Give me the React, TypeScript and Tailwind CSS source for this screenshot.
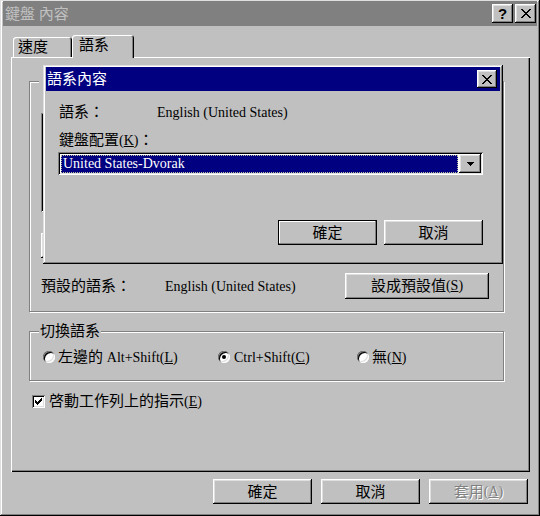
import type { ReactNode } from 'react';
import clsx from 'clsx';

const raised = 'shadow-[inset_-1px_-1px_#000,inset_1px_1px_#fff,inset_-2px_-2px_#808080,inset_2px_2px_#dfdfdf]';
const sunken = 'shadow-[inset_1px_1px_#808080,inset_-1px_-1px_#fff,inset_2px_2px_#000,inset_-2px_-2px_#dfdfdf]';

// latin runs are a bit smaller than the CJK glyphs
function E({ children }: { children: ReactNode }) {
  return <span className="text-[14px]">{children}</span>;
}

function Btn({ children, className, def, disabled }: { children?: ReactNode; className?: string; def?: boolean; disabled?: boolean }) {
  return (
    <div
      className={clsx(
        'flex items-center justify-center bg-[#c0c0c0] leading-[18px]',
        def ? 'border border-black shadow-[inset_-1px_-1px_#808080,inset_1px_1px_#fff]' : raised,
        disabled ? 'text-[#808080] [text-shadow:1px_1px_0_#fff]' : 'text-black',
        className,
      )}
    >
      {children}
    </div>
  );
}

function CloseGlyph() {
  return (
    <svg width="10" height="9" viewBox="0 0 10 9" shapeRendering="crispEdges">
      <path d="M0 0h2v1h1v1h1v1h2V2h1V1h1V0h2v1H9v1H8v1H7v1H6v1h1v1h1v1h1v1h1v1H8V8H7V7H6V6H4v1H3v1H2v1H0V8h1V7h1V6h1V5h1V4H3V3H2V2H1V1H0z" fill="#000" />
    </svg>
  );
}

function Radio({ checked }: { checked?: boolean }) {
  return (
    <span className="flex w-[12px] h-[12px] shrink-0 items-center justify-center rounded-full bg-white shadow-[inset_1px_1px_#808080,inset_-1px_-1px_#fff,inset_2px_2px_#000,inset_-2px_-2px_#dfdfdf]">
      {checked && <span className="w-[4px] h-[4px] rounded-full bg-black" />}
    </span>
  );
}

export default function App() {
  return (
    <div
      className={clsx(
        'relative flex flex-col w-[540px] h-[516px] bg-[#c0c0c0] px-[3px] pt-[1px] text-[15px] text-black',
        'shadow-[inset_-1px_-1px_#000,inset_1px_1px_#dfdfdf,inset_-2px_-2px_#808080,inset_2px_2px_#fff]',
      )}
      style={{ fontFamily: '"Liberation Serif", "Noto Sans CJK TC", serif' }}
    >
      {/* inactive title bar */}
      <div className="flex h-[25px] items-center justify-between bg-[#808080] pl-[2px] pr-[1px]">
        <span className="text-[#c0c0c0] leading-[18px]">鍵盤 內容</span>
        <div className="flex gap-[2px]">
          <Btn className="w-[21px] h-[19px]">
            <span className="text-[15px] font-bold" style={{ fontFamily: '"Liberation Sans", sans-serif' }}>?</span>
          </Btn>
          <Btn className="w-[21px] h-[19px]">
            <CloseGlyph />
          </Btn>
        </div>
      </div>

      {/* tabs */}
      <div className="mt-[9px] ml-[8px] flex h-[22px] items-end">
        <div className="ml-[2px] flex w-[59px] h-[20px] items-center pl-[5px] rounded-t-[3px] shadow-[inset_1px_1px_#fff,inset_-1px_0_#000,inset_-2px_0_#808080]">
          <span className="leading-[18px]">速度</span>
        </div>
        <div className="relative z-10 -mb-[1px] flex w-[62px] h-[23px] items-center pl-[7px] pb-[3px] rounded-t-[3px] bg-[#c0c0c0] shadow-[inset_1px_1px_#fff,inset_-1px_0_#000,inset_-2px_0_#808080]">
          <span className="leading-[18px]">語系</span>
        </div>
      </div>

      {/* tab page */}
      <div className="ml-[8px] flex w-[519px] h-[415px] flex-col pl-[18px] pt-[24px] shadow-[inset_1px_1px_#fff,inset_-1px_-1px_#000,inset_-2px_-2px_#808080]">
        {/* group: 語系 (covered by the dialog, only its left edge shows) */}
        <div className="relative flex w-[475px] h-[231px] flex-col border border-[#808080] px-[11px] pt-[14px] shadow-[1px_1px_0_#fff,inset_1px_1px_0_#fff]">
          <span className="absolute left-[9px] -top-[2px] w-[6px] h-[3px] bg-[#c0c0c0]" />
          <div className="h-[17px]" />
          <div className={clsx('h-[99px] bg-white', sunken)} />
          <div className="mt-[21px] flex gap-[8px]">
            <Btn className="w-[100px] h-[25px]" />
            <Btn className="w-[100px] h-[25px]" />
            <Btn className="w-[100px] h-[25px]" />
          </div>
          <div className="mt-[15px] flex h-[26px] items-center">
            <span className="w-[124px] leading-[18px]">預設的語系：</span>
            <span className="w-[180px] leading-[18px]"><E>English (United States)</E></span>
            <Btn className="w-[144px] h-[26px]">設成預設值<E>(<u>S</u>)</E></Btn>
          </div>
        </div>

        {/* group: 切換語系 */}
        <div className="relative mt-[19px] w-[475px] h-[50px] border border-[#808080] pl-[13px] pt-[16px] shadow-[1px_1px_0_#fff,inset_1px_1px_0_#fff]">
          <span className="absolute left-[9px] -top-[10px] bg-[#c0c0c0] px-[1px] leading-[18px]">切換語系</span>
          <div className="flex h-[18px] items-center">
            <label className="flex w-[175px] items-center gap-[3px]">
              <Radio />
              <span className="leading-[18px]">左邊的 <E>Alt+Shift(<u>L</u>)</E></span>
            </label>
            <label className="flex w-[139px] items-center gap-[4px]">
              <Radio checked />
              <span className="leading-[18px]"><E>Ctrl+Shift(<u>C</u>)</E></span>
            </label>
            <label className="flex items-center gap-[3px]">
              <Radio />
              <span className="leading-[18px]">無<E>(<u>N</u>)</E></span>
            </label>
          </div>
        </div>

        <label className="mt-[12px] ml-[3px] flex h-[16px] items-center gap-[4px]">
          <span className={clsx('flex w-[13px] h-[13px] items-center justify-center bg-white', sunken)}>
            <svg width="7" height="7" viewBox="0 0 7 7" shapeRendering="crispEdges">
              <path d="M6 0h1v3H6v1H5v1H4v1H3v1H2V6H1V5H0V2h1v1h1v1h1V3h1V2h1V1h1z" fill="#000" />
            </svg>
          </span>
          <span className="leading-[18px]">啓動工作列上的指示<E>(<u>E</u>)</E></span>
        </label>
      </div>

      {/* dialog buttons */}
      <div className="mt-[7px] flex justify-end gap-[9px] pr-[9px]">
        <Btn className="w-[99px] h-[25px]">確定</Btn>
        <Btn className="w-[99px] h-[25px]">取消</Btn>
        <Btn className="w-[99px] h-[25px]" disabled>套用<E>(<u>A</u>)</E></Btn>
      </div>

      {/* child window: 語系內容 */}
      <div
        className={clsx(
          'absolute left-[43px] top-[65px] z-20 flex w-[460px] h-[199px] flex-col bg-[#c0c0c0] px-[3px] pt-[2px]',
          'shadow-[inset_-1px_-1px_#000,inset_1px_1px_#dfdfdf,inset_-2px_-2px_#808080,inset_2px_2px_#fff]',
        )}
      >
        <div className="flex h-[24px] items-center justify-between bg-[#000080] pl-[1px] pr-[3px]">
          <span className="text-white leading-[18px]">語系內容</span>
          <Btn className="w-[20px] h-[18px]">
            <CloseGlyph />
          </Btn>
        </div>
        <div className="flex flex-col pl-[13px] pr-[16px]">
          <div className="mt-[12px] flex h-[18px] items-center">
            <span className="w-[98px] leading-[18px]">語系：</span>
            <span className="leading-[18px]"><E>English (United States)</E></span>
          </div>
          <span className="mt-[10px] h-[18px] leading-[18px]">鍵盤配置<E>(<u>K</u>)</E>：</span>
          <div className={clsx('mt-[3px] -ml-[1px] flex w-[425px] h-[23px] items-center bg-white p-[2px]', sunken)}>
            <div className="ml-[1px] flex h-[18px] flex-1 items-center bg-[#000080] pl-[2px] outline outline-1 outline-dotted outline-[#c0c0a0] -outline-offset-1">
              <span className="text-white leading-[18px]"><E>United States-Dvorak</E></span>
            </div>
            <Btn className="ml-[1px] w-[22px] h-[19px]">
              <svg width="7" height="4" viewBox="0 0 7 4" shapeRendering="crispEdges">
                <path d="M0 0h7v1H6v1H5v1H4v1H3V3H2V2H1V1H0z" fill="#000" />
              </svg>
            </Btn>
          </div>
          <div className="mt-[45px] flex justify-end gap-[7px] pr-[1px]">
            <Btn def className="w-[99px] h-[25px]">確定</Btn>
            <Btn className="w-[99px] h-[25px]">取消</Btn>
          </div>
        </div>
      </div>
    </div>
  );
}
